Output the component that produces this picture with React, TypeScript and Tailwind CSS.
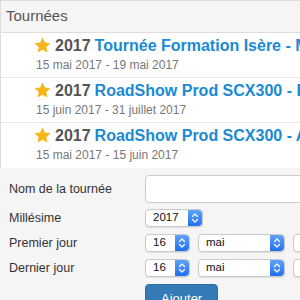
import React from 'react';

const tours = [
  { year: '2017', name: 'Tournée Formation Isère - Mai', dates: '15 mai 2017 - 19 mai 2017' },
  { year: '2017', name: 'RoadShow Prod SCX300 - Paris', dates: '15 juin 2017 - 31 juillet 2017' },
  { year: '2017', name: 'RoadShow Prod SCX300 - Alpes', dates: '15 mai 2017 - 15 juin 2017' },
];

function Star() {
  return (
    <svg width="17" height="17" viewBox="0 0 24 24" className="shrink-0 -mt-[1px]">
      <path
        d="M12 .8l3.4 7.1 7.8.9-5.8 5.4 1.5 7.7L12 18.1l-6.9 3.8 1.5-7.7L.8 8.8l7.8-.9z"
        fill="#f7b51c"
      />
    </svg>
  );
}

function Stepper() {
  return (
    <div className="w-[14px] h-full shrink-0 rounded-r-[4px] bg-gradient-to-b from-[#5fa2fa] to-[#1f6ff0] flex items-center justify-center">
      <svg width="8" height="12" viewBox="0 0 8 12" fill="none" stroke="#fff" strokeWidth="1.3" strokeLinecap="round" strokeLinejoin="round">
        <path d="M1.5 4.5L4 2l2.5 2.5" />
        <path d="M1.5 7.5L4 10l2.5-2.5" />
      </svg>
    </div>
  );
}

function FakeSelect({ value, width }: { value: string; width: string }) {
  return (
    <div className={`${width} h-[18px] flex items-center bg-white border border-[#c9c9c9] rounded-[4px] shadow-[0_1px_1px_rgba(0,0,0,0.08)] shrink-0`}>
      <span className="flex-1 pl-[7px] text-[11.5px] leading-none text-[#111]">{value}</span>
      <Stepper />
    </div>
  );
}

function Label({ children }: { children: React.ReactNode }) {
  return <div className="w-[145px] shrink-0 pl-[9px] text-[12.5px] text-[#333]">{children}</div>;
}

function DateRow({ label }: { label: string }) {
  return (
    <div className="flex items-center h-[18px]">
      <Label>{label}</Label>
      <div className="flex gap-[8px] shrink-0">
        <FakeSelect value="16" width="w-[45px]" />
        <FakeSelect value="mai" width="w-[87px]" />
        <FakeSelect value="2017" width="w-[58px]" />
      </div>
    </div>
  );
}

export default function App() {
  return (
    <div className="w-[300px] h-[300px] overflow-hidden bg-[#f5f5f5] font-['Liberation_Sans',Arial,sans-serif]">
      <div className="border-l border-t border-[#dddddd]">
        <div className="h-[32px] bg-[#f5f5f5] border-b border-[#dddddd] pl-[5px] flex items-center">
          <span className="text-[15px] text-[#555]">Tournées</span>
        </div>
        <ul className="bg-white">
          {tours.map((t, i) => (
            <li
              key={i}
              className={`h-[45px] pl-[33px] pt-[4px] whitespace-nowrap ${i < tours.length - 1 ? 'border-b border-[#e6e6e6]' : ''}`}
            >
              <div className="flex items-center gap-[4px] h-[18px] text-[16px] font-bold">
                <Star />
                <span className="text-[#555]">{t.year}</span>
                <span className="text-[#1a8ad4]">{t.name}</span>
              </div>
              <div className="pl-[2px] mt-[2px] text-[12px] leading-[16px] text-[#777]">{t.dates}</div>
            </li>
          ))}
        </ul>
      </div>
      <form className="pt-[7px] flex flex-col">
        <div className="flex items-center h-[28px]">
          <Label>Nom de la tournée</Label>
          <div className="w-[170px] h-[28px] bg-white border border-[#cccccc] rounded-[4px] shrink-0" />
        </div>
        <div className="flex items-center h-[18px] mt-[6px]">
          <Label>Millésime</Label>
          <FakeSelect value="2017" width="w-[58px]" />
        </div>
        <div className="mt-[7px]">
          <DateRow label="Premier jour" />
        </div>
        <div className="mt-[7px]">
          <DateRow label="Dernier jour" />
        </div>
        <div className="mt-[7px] pl-[145px]">
          <button
            type="button"
            className="bg-[#337ab7] border border-[#2e6da4] text-white text-[13px] leading-[18px] px-[15px] pt-[5px] pb-[7px] rounded-[4px]"
          >
            Ajouter
          </button>
        </div>
      </form>
    </div>
  );
}
